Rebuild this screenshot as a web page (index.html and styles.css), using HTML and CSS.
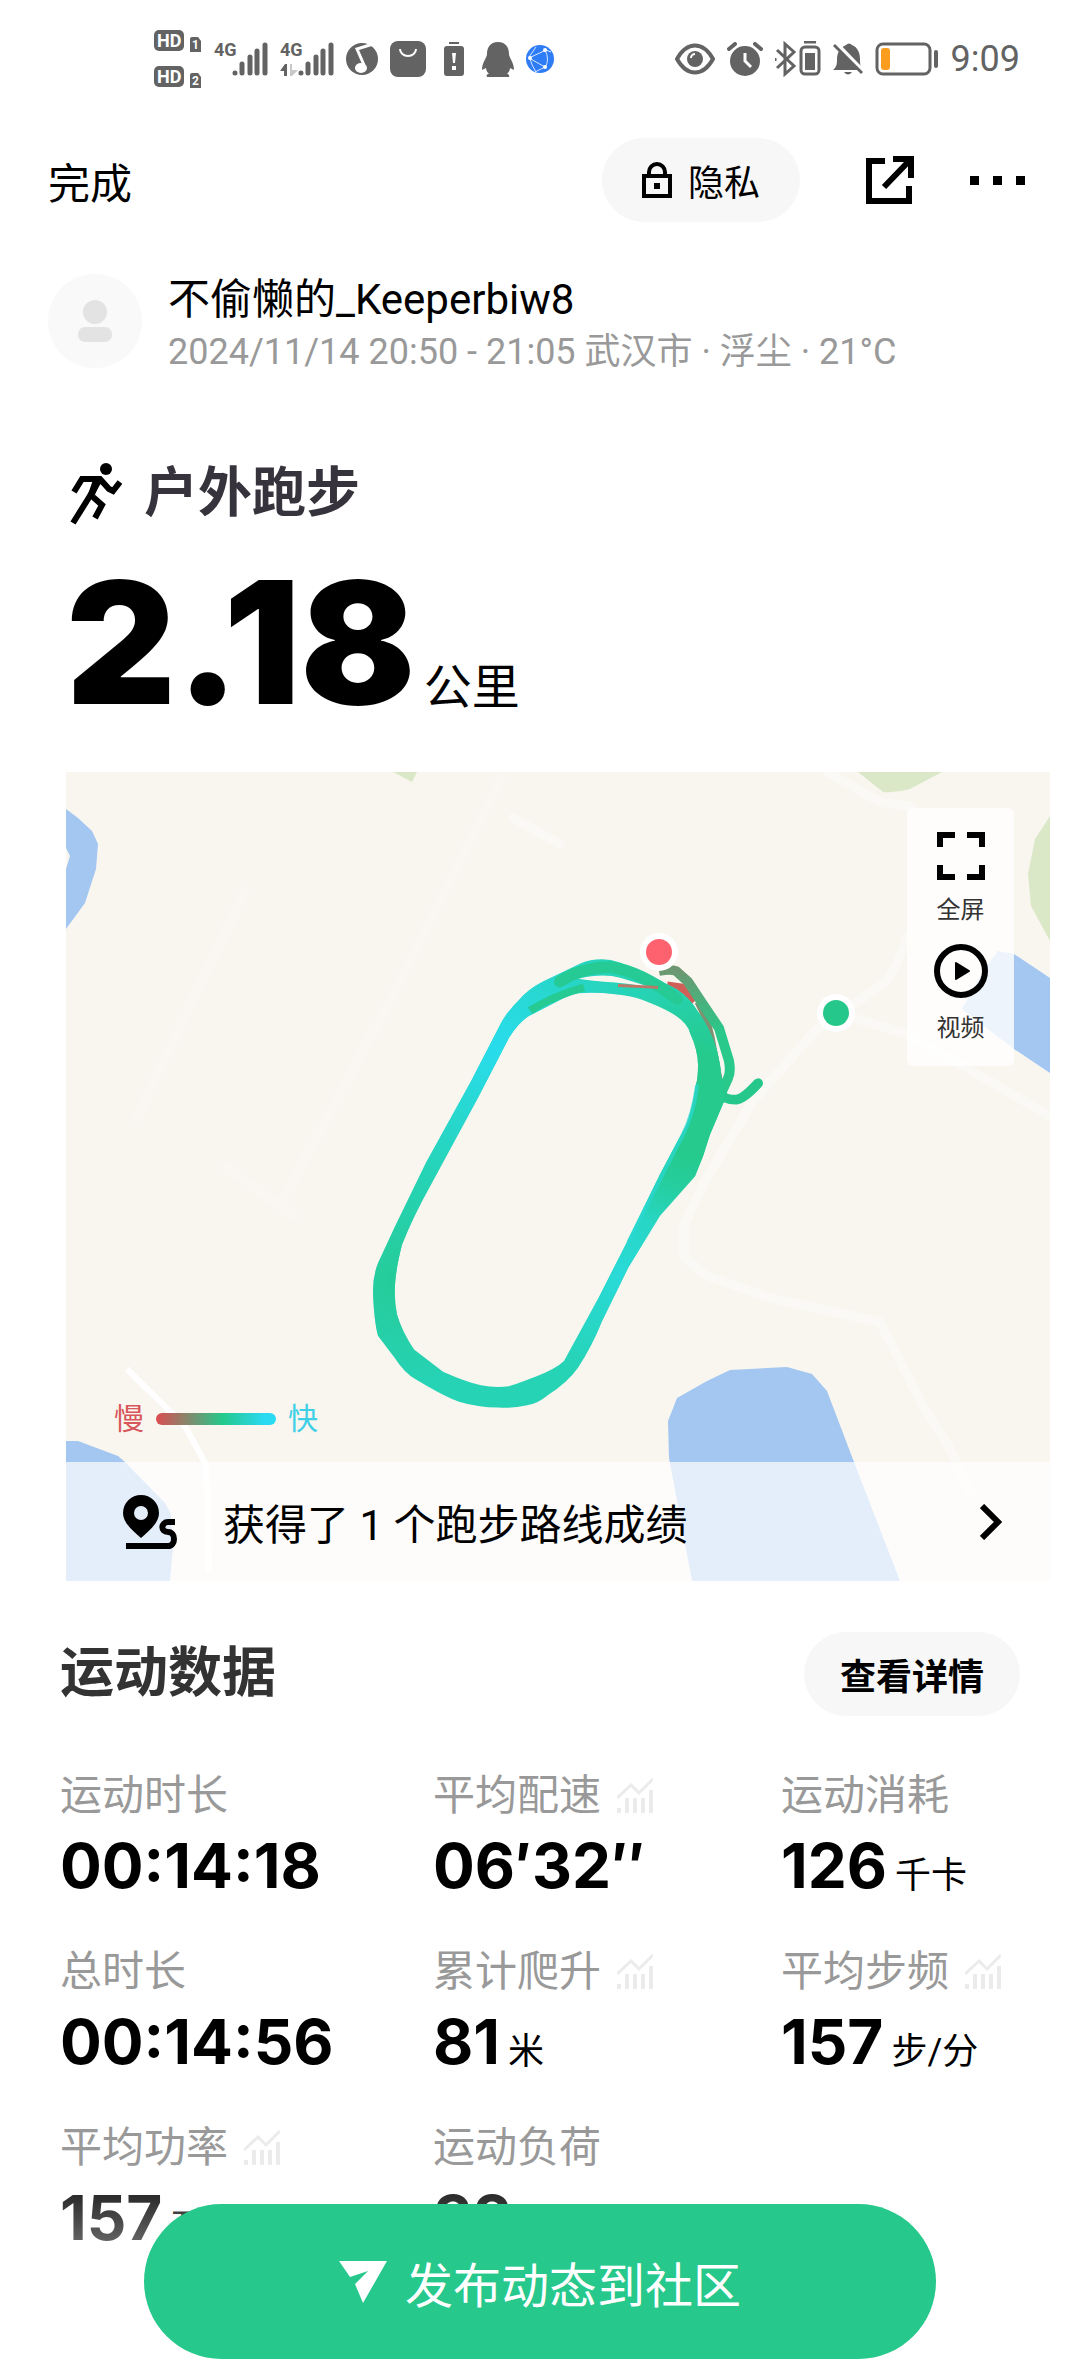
FILE: index.html
```html
<!DOCTYPE html>
<html lang="zh-CN">
<head>
    <meta charset="utf-8">
    <meta name="viewport" content="width=device-width, initial-scale=1">
    <title>户外跑步</title>
    <link rel="stylesheet" href="styles.css">
</head>
<body>
    <!-- shared icons -->
    <svg class="defs" aria-hidden="true">
        <symbol id="chart" viewBox="0 0 36 36">
            <path d="M0 20 14 7l8 8L36 1" fill="none" stroke="#ebebeb" stroke-width="3"/>
            <path d="M0 30h4v5H0zM8 20h4v15H8zM16 20h4v15h-4zM24 20h4v15h-4zM32 12h4v23h-4z" fill="#ebebeb"/>
        </symbol>
        <symbol id="bars" viewBox="0 0 36 34">
            <path d="M3 31v0M10 31V22M18 31V15M25 31V9M33 31V3" fill="none" stroke="#636363" stroke-width="5" stroke-linecap="round"/>
        </symbol>
    </svg>

    <div class="statusbar">
        <div class="status-left">
            <svg width="48" height="58" viewBox="0 0 48 58">
                <g fill="#636363">
                    <rect width="30" height="21" rx="5"/>
                    <rect y="36" width="30" height="21" rx="5"/>
                    <path d="M36 9q0-2 2-2h6l3 4v11H36zM36 45q0-2 2-2h6l3 4v11H36z"/>
                </g>
                <g class="glyph">
                    <text x="3" y="17" font-size="18">HD</text>
                    <text x="3" y="53" font-size="18">HD</text>
                    <text x="38" y="19" font-size="12">1</text>
                    <text x="38" y="55" font-size="12">2</text>
                </g>
            </svg>
            <div class="signal">
                <span>4G</span>
                <svg width="36" height="34"><use href="#bars"/></svg>
            </div>
            <div class="signal">
                <span>4G</span>
                <svg class="arrows" width="18" height="12" viewBox="0 0 18 12"><path d="M0 7 5 0h2v12H4V7z" fill="#636363"/><path d="M10 0h2v6h6l-6 6h-2z" fill="#c8c8c8"/></svg>
                <svg width="36" height="34"><use href="#bars"/></svg>
            </div>
            <svg width="32" height="32" viewBox="0 0 32 32">
                <circle cx="16" cy="16" r="16" fill="#636363"/>
                <path d="M27 1 11 6l7 16" fill="none" stroke="#fff" stroke-width="3"/>
                <ellipse cx="15" cy="25" rx="6" ry="5" fill="#fff"/>
            </svg>
            <svg width="36" height="36" viewBox="0 0 36 36">
                <rect width="36" height="36" rx="8" fill="#636363"/>
                <path d="M10 8a8 7 0 0 0 16 0" fill="none" stroke="#fff" stroke-width="2"/>
            </svg>
            <svg class="low" width="20" height="34" viewBox="0 0 20 34">
                <path d="M5 0h10v2H5zM3 4h14q3 0 3 3v24q0 3-3 3H3q-3 0-3-3V7q0-3 3-3z" fill="#636363"/>
                <path d="M8 11h4l-1 10H9zM8 24h4v4H8z" fill="#fff"/>
            </svg>
            <svg width="32" height="35" viewBox="0 0 32 35">
                <path d="M16 0C8 0 5 6 5 12c0 4-5 8-5 16l4-2c0 3 2 5 3 6-2 0-3 1-2 3h22c1-2-1-3-2-3 1-1 3-3 3-6l4 2c0-8-5-12-5-16 0-6-3-12-11-12z" fill="#636363"/>
            </svg>
            <svg width="28" height="28" viewBox="0 0 28 28">
                <circle cx="14" cy="14" r="14" fill="#2f7df6"/>
                <path d="M3 13 20 5l5 2M3 13l16 9M19 5q5 9 0 18M4 14q2 7 6 13M3 12l7-10M19 22l-10 5" fill="none" stroke="#d6e8ff" stroke-width="1"/>
                <circle cx="4" cy="13" r="2" fill="#fff"/><circle cx="19" cy="5" r="2" fill="#fff"/><circle cx="19" cy="22" r="2" fill="#fff"/>
            </svg>
        </div>
        <div class="status-right">
            <svg width="40" height="32" viewBox="0 0 40 32">
                <path d="M2 16C12-2 28-2 38 16 28 34 12 34 2 16z" fill="none" stroke="#636363" stroke-width="4"/>
                <circle cx="20" cy="16" r="8" fill="#636363"/>
                <path d="M16 15a4 4 0 0 1 4-4" fill="none" stroke="#fff" stroke-width="2"/>
            </svg>
            <svg width="36" height="34" viewBox="0 0 36 34">
                <circle cx="18" cy="19" r="15" fill="#636363"/>
                <path d="M2 7 8 2M34 7l-6-5" stroke="#636363" stroke-width="4" stroke-linecap="round"/>
                <path d="M18 11v8l6 6" fill="none" stroke="#fff" stroke-width="3"/>
            </svg>
            <svg width="46" height="36" viewBox="0 0 46 36">
                <path d="m2 9 17 16-9 8V3l9 8L2 27M0 17v3" fill="none" stroke="#636363" stroke-width="3"/>
                <rect x="26" y="6" width="18" height="27" rx="4" fill="none" stroke="#636363" stroke-width="3"/>
                <path d="M29 1h12M35 12v17" stroke="#636363" stroke-width="3"/>
                <path d="M30 12h10v17H30z" fill="#636363"/>
            </svg>
            <svg width="30" height="32" viewBox="0 0 30 32">
                <path d="M0 27c4-3 4-7 4-11 0-7 4-12 9-14q3-3 6 0c5 2 8 7 8 14 0 4 0 8 3 11zM11 29h8q-4 5-8 0z" fill="#636363"/>
                <path d="m3 0 28 29" stroke="#fff" stroke-width="4"/>
                <path d="m1 2 28 28" stroke="#636363" stroke-width="3"/>
            </svg>
            <svg width="64" height="34" viewBox="0 0 64 34">
                <rect x="2" y="2" width="53" height="30" rx="6" fill="none" stroke="#636363" stroke-width="3"/>
                <rect x="6" y="6" width="9" height="22" rx="3" fill="#fb9e1f"/>
                <path d="M61 10v14" stroke="#636363" stroke-width="4" stroke-linecap="round"/>
            </svg>
            <span class="clock">9:09</span>
        </div>
    </div>

    <header class="topbar">
        <button class="done">完成</button>
        <button class="pill privacy">
            <svg width="30" height="36" viewBox="0 0 30 36">
                <path d="M2 14h26v20H2zM7 14v-4a8 8 0 0 1 16 0v4" fill="none" stroke="#000" stroke-width="4"/>
                <path d="M12 21h6v6h-6z"/>
            </svg>
            隐私
        </button>
        <button class="icon-btn" aria-label="分享">
            <svg width="48" height="48" viewBox="0 0 48 48">
                <path d="M19 5H3v40h40V30M18 31 44 4M27 3h18v19" fill="none" stroke="#000" stroke-width="6"/>
            </svg>
        </button>
        <button class="icon-btn" aria-label="更多">
            <svg width="56" height="10" viewBox="0 0 56 10"><path d="M0 1h9v9H0zM23 1h9v9h-9zM46 1h9v9h-9z"/></svg>
        </button>
    </header>

    <main>
        <section class="user">
            <svg width="94" height="94" viewBox="0 0 94 94">
                <circle cx="47" cy="47" r="47" fill="#f9f9f9"/>
                <circle cx="47" cy="38" r="12" fill="#e3e3e3"/>
                <rect x="30" y="53" width="34" height="15" rx="7" fill="#e3e3e3"/>
            </svg>
            <div>
                <p class="name">不偷懒的_Keeperbiw8</p>
                <p class="meta">2024/11/14 20:50 - 21:05 武汉市 · 浮尘 · 21°C</p>
            </div>
        </section>

        <section class="summary">
            <h1>
                <svg width="52" height="62" viewBox="0 0 52 62">
                    <circle cx="36" cy="6" r="6"/>
                    <path d="M4 29l8-13h18l9 10 4 2 7-9M30 16 18 36 3 60" fill="none" stroke="#000" stroke-width="6"/>
                    <path d="m23 34 9 8-7 13" fill="none" stroke="#000" stroke-width="6"/>
                    <path d="m24 14 8 2-9 20-6-2z"/>
                </svg>
                户外跑步
            </h1>
            <p class="distance"><strong>2.18</strong>公里</p>
        </section>

        <section class="map">
            <svg class="map-canvas" viewBox="66 771 984 809" preserveAspectRatio="xMidYMid slice">
                <defs>
                    <radialGradient id="fast" gradientUnits="userSpaceOnUse" cx="495" cy="1050" r="150">
                        <stop offset="0" stop-color="#29dcec"/>
                        <stop offset="1" stop-color="#29dcec" stop-opacity="0"/>
                    </radialGradient>
                    <radialGradient id="fast2" gradientUnits="userSpaceOnUse" cx="620" cy="1285" r="110">
                        <stop offset="0" stop-color="#29dad8"/>
                        <stop offset="1" stop-color="#29dad8" stop-opacity="0"/>
                    </radialGradient>
                    <radialGradient id="mid" gradientUnits="userSpaceOnUse" cx="700" cy="1110" r="130">
                        <stop offset=".4" stop-color="#25ca8c"/>
                        <stop offset="1" stop-color="#25ca8c" stop-opacity="0"/>
                    </radialGradient>
                    <radialGradient id="mid2" gradientUnits="userSpaceOnUse" cx="400" cy="1290" r="110">
                        <stop offset="0" stop-color="#25cb98"/>
                        <stop offset="1" stop-color="#25cb98" stop-opacity="0"/>
                    </radialGradient>
                    <linearGradient id="start" x1="0" y1="0" x2="0" y2="1">
                        <stop offset="0" stop-color="#6d9770"/>
                        <stop offset=".5" stop-color="#28c98a"/>
                    </linearGradient>
                    <path id="ring" fill-rule="evenodd" d="M602 959Q590 959 581 963L543 982Q528 990 519 1001Q509 1011 502 1023L471 1085 426 1169 395 1235 378 1273Q373 1286 373 1302Q374 1333 378 1348L395 1371Q405 1387 416 1393Q445 1411 459 1416Q478 1422 498 1422Q513 1423 526 1420Q538 1418 548 1409Q567 1397 578 1381Q592 1359 602 1333L628 1278 660 1224 695 1183Q704 1162 710 1140L724 1106 720 1068Q718 1055 714 1044Q708 1027 698 1013Q690 999 677 990L640 970 619 962Q611 959 602 959z
                        M578 994Q597 993 615 995T640 1000Q666 1010 677 1018T690 1035Q698 1053 698 1068T696 1088Q692 1116 686 1131L660 1181 629 1247 598 1310 564 1374Q556 1382 536 1390T509 1400Q495 1402 481 1399T443 1385L414 1362Q402 1344 397 1326Q394 1312 395 1295T402 1254Q413 1225 431 1192L478 1102 509 1040Q518 1025 528 1018L560 1001Q568 996 578 994z
                        M578 979Q603 973 620 978T656 990Q640 985 615 983T578 979z"/>
                </defs>
                <path fill="#f9f6f0" d="M66 771h984v809H66z"/>

                <!-- parks -->
                <path d="M393 771l19 10 5-10zM858 771l25 20q14 1 27-3l32-17zM1050 815l-15 23-7 35 3 32 19 35z" fill="#dae8c8"/>

                <!-- roads -->
                <g fill="none" stroke="#fbf9f5" stroke-width="9" stroke-linejoin="round" stroke-linecap="round">
                    <path d="M907 935q-12 40-27 50l-65 45-62 70-48 80-21 44v32l21 18 65 23 110 24 43 84 27 43 20 43"/>
                    <path d="M836 1012l71 21 143 82M827 771l53 30 33 5M513 817l47 26"/>
                    <path d="M135 1120l110-230M285 1195 390 1000l115-230M225 1165l70 50" stroke="#faf7f2"/>
                </g>
                <path d="M127 1368l58 57 20 37 3 35 1 73" fill="none" stroke="#fff" stroke-width="6"/>

                <!-- lakes -->
                <g fill="#a3c7f1">
                    <path d="M66 808l12 9 14 13 6 13-2 25-11 34-19 26v-60l4-13-4-8z"/>
                    <path d="M66 1440h12l40 15 7 6 40 41 6 11 2 34-3 33H66z"/>
                    <path d="M668 1420l9-23 30-17 23-11 57-3 25 7 15 17 27 71 46 119H692l-23-123z"/>
                    <path d="M1014 953l36 24v95l-36-24-52-40 23-41 13-17z"/>
                </g>

                <!-- track -->
                <g transform="translate(0 30) scale(1 .968)">
                    <path d="M667 987l14 2 13 14" fill="none" stroke="#cf6058" stroke-width="10"/>
                    <path d="M698 1003q10 20 13 36l10 55" fill="none" stroke="#7f9070" stroke-width="7"/>
                    <path d="M659 971q12-2 17 0l12 11 14 22 17 26 10 34q2 12-1 18l-8 18" fill="none" stroke="url(#start)" stroke-width="10"/>
                    <path d="M758 1087q-14 16-22 17-12 0-16-6" fill="none" stroke="#25c88a" stroke-width="10" stroke-linecap="round"/>
                    <use href="#ring" fill="#26d3b5"/>
                    <use href="#ring" fill="url(#fast)"/>
                    <use href="#ring" fill="url(#fast2)"/>
                    <use href="#ring" fill="url(#mid)"/>
                    <use href="#ring" fill="url(#mid2)"/>
                    <path d="M697 1090q-4 30-14 50l-26 52-28 58" fill="none" stroke="#2ad8d3" stroke-width="4" stroke-linecap="round" opacity=".7"/>
                    <path d="M530 1012q25-16 54-24" fill="none" stroke="#25cb93" stroke-width="8"/>
                    <path d="M560 982q20-14 50-15 30 4 67 33" fill="none" stroke="#25ca94" stroke-width="12" stroke-linecap="round"/>
                    <path d="M618 986l40 2" stroke="#bd7767" stroke-width="3"/>
                </g>

                <circle cx="659" cy="951" r="19" fill="#fff"/>
                <circle cx="659" cy="951" r="13" fill="#ff626f"/>
                <circle cx="836" cy="1012" r="19" fill="#fff"/>
                <circle cx="836" cy="1012" r="13" fill="#26c78a"/>
            </svg>

            <div class="map-tools">
                <button>
                    <svg width="48" height="48" viewBox="0 0 48 48"><path d="M3 15V3h15M30 3h15v12M45 33v12H30M18 45H3V33" fill="none" stroke="#000" stroke-width="6"/></svg>
                    全屏
                </button>
                <button>
                    <svg width="54" height="54" viewBox="0 0 54 54"><circle cx="27" cy="27" r="24" fill="none" stroke="#000" stroke-width="6"/><path d="M22 19l13 8-13 8z" stroke="#000" stroke-width="2" stroke-linejoin="round"/></svg>
                    视频
                </button>
            </div>

            <div class="legend">
                <span class="slow">慢</span>
                <span class="scale"></span>
                <span class="fast">快</span>
            </div>

            <a class="route" href="#">
                <svg width="54" height="54" viewBox="0 0 54 54">
                    <path d="M18 0a18 18 0 0 0-18 18c0 10 10 18 18 25 8-7 18-15 18-25A18 18 0 0 0 18 0zm0 11a7 7 0 1 1 0 14 7 7 0 0 1 0-14z" fill-rule="evenodd"/>
                    <path d="M52 27h-7c-7 0-8 10 0 10s8 14 0 14H3" fill="none" stroke="#000" stroke-width="6"/>
                </svg>
                <span>获得了 1 个跑步路线成绩</span>
                <svg width="22" height="36" viewBox="0 0 22 36"><path d="m2 2 16 16L2 34" fill="none" stroke="#000" stroke-width="6"/></svg>
            </a>
        </section>

        <section class="data">
            <div class="data-head">
                <h2>运动数据</h2>
                <button class="pill detail">查看详情</button>
            </div>
            <dl class="stats">
                <div>
                    <dt>运动时长</dt>
                    <dd><b>00:14:18</b></dd>
                </div>
                <div>
                    <dt>平均配速 <svg><use href="#chart"/></svg></dt>
                    <dd><b>06′32″</b></dd>
                </div>
                <div>
                    <dt>运动消耗</dt>
                    <dd><b>126</b>千卡</dd>
                </div>
                <div>
                    <dt>总时长</dt>
                    <dd><b>00:14:56</b></dd>
                </div>
                <div>
                    <dt>累计爬升 <svg><use href="#chart"/></svg></dt>
                    <dd><b>81</b>米</dd>
                </div>
                <div>
                    <dt>平均步频 <svg><use href="#chart"/></svg></dt>
                    <dd><b>157</b>步/分</dd>
                </div>
                <div>
                    <dt>平均功率 <svg><use href="#chart"/></svg></dt>
                    <dd><b>157</b>瓦</dd>
                </div>
                <div>
                    <dt>运动负荷</dt>
                    <dd><b>32</b></dd>
                </div>
            </dl>
        </section>
    </main>

    <footer class="publish-bar">
        <button class="publish">
            <svg width="48" height="42" viewBox="0 0 48 42"><path d="M0 0h48L24 42l-8-19 13-13-18 6z" fill="#fff"/></svg>
            发布动态到社区
        </button>
    </footer>
</body>
</html>
```

FILE: styles.css
```css
* {
    box-sizing: border-box;
}

body {
    margin: 0;
    min-height: 100vh;
    background: #fff;
    color: #000;
    font-family: Roboto, "Noto Sans CJK SC", sans-serif;
    font-size: 42px;
}

h1, h2, p, dl, dd {
    margin: 0;
}

button {
    border: 0;
    padding: 0;
    background: none;
    color: inherit;
    font: inherit;
    cursor: pointer;
}

svg {
    display: block;
    flex: none;
}

.defs {
    position: absolute;
    width: 0;
    height: 0;
}

/* status bar */
.statusbar {
    display: flex;
    justify-content: space-between;
    align-items: center;
    height: 118px;
    padding: 0 60px 0 154px;
    color: #636363;
}

.status-left {
    display: flex;
    align-items: center;
    gap: 12px;
}

.status-right {
    display: flex;
    align-items: center;
    gap: 12px;
}

.glyph {
    fill: #fff;
    font-weight: 700;
}

.signal {
    position: relative;
    display: flex;
    font-family: "Liberation Sans Narrow", Roboto, sans-serif;
    font-size: 18px;
    font-weight: 700;
    line-height: 16px;
}

.signal span {
    width: 18px;
}

.signal .arrows {
    position: absolute;
    left: 0;
    bottom: 0;
}

.low {
    margin: 0 6px;
}

.clock {
    font-size: 36px;
    line-height: 40px;
}

/* top bar */
.topbar {
    display: flex;
    align-items: center;
    height: 124px;
    padding: 0 54px 0 48px;
}

.done {
    margin-right: auto;
}

.pill {
    display: flex;
    align-items: center;
    justify-content: center;
    height: 84px;
    border-radius: 42px;
    background: #f7f7f7;
    font-size: 36px;
}

.privacy {
    width: 198px;
    gap: 16px;
    margin-right: 66px;
}

.icon-btn + .icon-btn {
    margin-left: 56px;
}

/* user */
.user {
    display: flex;
    gap: 26px;
    padding: 32px 48px 0;
}

.name {
    line-height: 52px;
}

.meta {
    color: #999;
    font-size: 36px;
    line-height: 52px;
}

/* distance */
.summary {
    padding: 80px 66px 0;
}

h1 {
    display: flex;
    align-items: center;
    gap: 22px;
    padding-left: 4px;
    color: #37333c;
    font-size: 54px;
    line-height: 72px;
}

.distance {
    display: flex;
    align-items: baseline;
    gap: 8px;
    margin-top: 36px;
    font-size: 48px;
    line-height: 48px;
}

.distance strong {
    font-family: Inter, sans-serif;
    font-size: 170px;
    font-weight: 900;
    line-height: 152px;
}

/* map */
.map {
    position: relative;
    margin: 54px 30px 0 66px;
    aspect-ratio: 984 / 809;
    overflow: hidden;
}

.map-canvas {
    width: 100%;
    height: 100%;
}

.map-tools {
    position: absolute;
    top: 36px;
    right: 36px;
    display: flex;
    flex-direction: column;
    gap: 16px;
    padding: 24px 0 20px;
    width: 107px;
    border-radius: 6px;
    background: rgba(255, 255, 255, .8);
}

.map-tools button {
    display: flex;
    flex-direction: column;
    align-items: center;
    gap: 12px;
    color: #333;
    font-size: 24px;
    line-height: 36px;
}

.legend {
    position: absolute;
    left: 48px;
    bottom: 144px;
    display: flex;
    align-items: center;
    gap: 12px;
    font-size: 30px;
    line-height: 36px;
}

.slow {
    color: #d8575b;
}

.fast {
    color: #3fcfe6;
}

.scale {
    width: 120px;
    height: 12px;
    border-radius: 6px;
    background: linear-gradient(90deg, #dc4c50, #25c88a 55%, #2ad9f2 90%);
}

.route {
    position: absolute;
    left: 0;
    right: 0;
    bottom: 0;
    display: flex;
    align-items: center;
    gap: 46px;
    height: 119px;
    padding: 0 48px 0 57px;
    background: rgba(255, 255, 255, .7);
    color: #000;
    text-decoration: none;
}

.route span {
    flex: 1;
}

/* data */
.data {
    padding: 51px 60px 0;
}

.data-head {
    display: flex;
    align-items: center;
    justify-content: space-between;
}

h2 {
    color: #333;
    font-size: 54px;
    line-height: 72px;
}

.detail {
    width: 216px;
    font-weight: 700;
}

.stats {
    display: grid;
    grid-template-columns: 373fr 348fr 239fr;
    row-gap: 44px;
    margin-top: 54px;
    padding-bottom: 112px;
}

dt {
    display: flex;
    align-items: center;
    gap: 16px;
    color: #999;
    line-height: 52px;
    white-space: nowrap;
}

dt svg {
    width: 36px;
    height: 36px;
}

dd {
    display: flex;
    align-items: baseline;
    gap: 8px;
    margin-top: 8px;
    font-size: 36px;
    line-height: 48px;
    white-space: nowrap;
}

dd b {
    font-family: Inter, sans-serif;
    font-size: 62px;
    line-height: 72px;
}

/* publish button floats over the list */
.publish-bar {
    position: fixed;
    left: 0;
    right: 0;
    bottom: 0;
    display: flex;
    justify-content: center;
    padding: 44px 144px 11px;
    background: linear-gradient(rgba(255, 255, 255, 0), #fff);
}

.publish {
    display: flex;
    align-items: center;
    justify-content: center;
    gap: 18px;
    width: 100%;
    height: 155px;
    border-radius: 78px;
    background: #26c88c;
    color: #fff;
    font-size: 48px;
}
```
